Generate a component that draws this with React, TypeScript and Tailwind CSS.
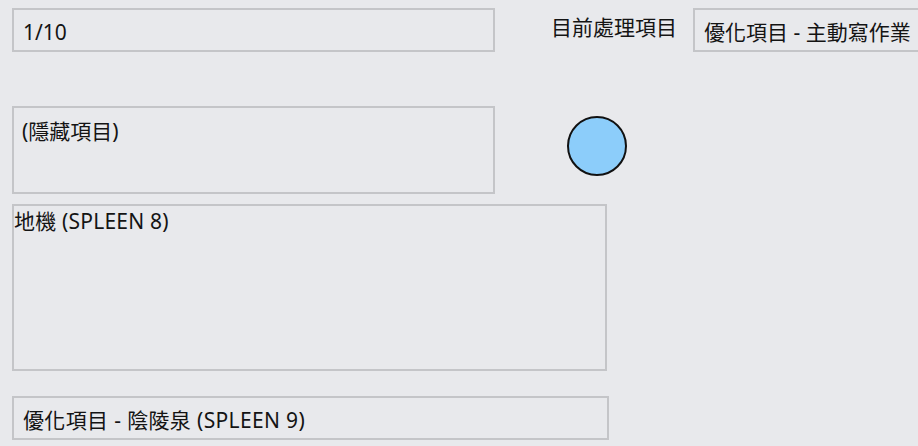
export default function App() {
  return (
    <div className="w-[918px] h-[446px] overflow-hidden bg-[#e8e9ec] pt-[8px] pl-[12px] text-[21px] leading-[28px] text-[#141414] font-['Noto_Sans','Noto_Sans_CJK_TC',sans-serif]">
      {/* top row */}
      <div className="flex items-start">
        <div className="flex-none w-[483px] h-[44px] border-2 border-[#c4c5c8] flex items-center pl-[9px] pt-[3px]">
          1/10
        </div>
        <div className="flex-none ml-[56px] mt-[5px] whitespace-nowrap">目前處理項目</div>
        <div className="flex-none ml-[16px] w-[260px] h-[44px] border-2 border-[#c4c5c8] flex items-center pl-[9px] pt-[3px] whitespace-nowrap">
          優化項目 - 主動寫作業
        </div>
      </div>

      {/* hidden item + indicator */}
      <div className="flex items-start mt-[54px]">
        <div className="flex-none w-[483px] h-[88px] border-2 border-[#c4c5c8] pl-[8px] pt-[9px]">
          (隱藏項目)
        </div>
        <div className="flex-none ml-[72px] mt-[10px] w-[60px] h-[60px] rounded-full border-2 border-[#111] bg-[#8ccdfa]" />
      </div>

      <div className="mt-[10px] w-[595px] h-[167px] border-2 border-[#c4c5c8] pt-[1px] tracking-[0.2px]">
        地機 (SPLEEN 8)
      </div>

      <div className="mt-[25px] w-[597px] h-[44px] border-2 border-[#c4c5c8] flex items-center pl-[9px] pt-[3px] tracking-[0.35px]">
        優化項目 - 陰陵泉 (SPLEEN 9)
      </div>
    </div>
  );
}
